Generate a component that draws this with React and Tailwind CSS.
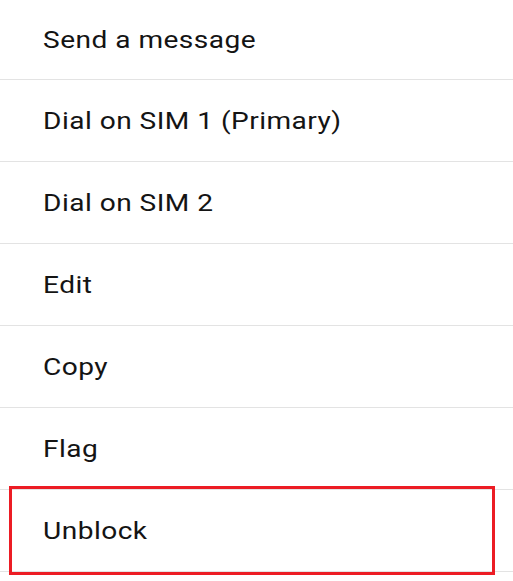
export default function App() {
  const items = [
    "Send a message",
    "Dial on SIM 1 (Primary)",
    "Dial on SIM 2",
    "Edit",
    "Copy",
    "Flag",
    "Unblock",
  ];
  return (
    <div className="relative w-[513px] h-[581px] bg-white overflow-hidden" style={{ fontFamily: "Roboto, 'Noto Sans', sans-serif" }}>
      <div className="flex flex-col">
        {items.map((t, i) => (
          <div
            key={t}
            className={`flex items-center pl-[43px] border-b border-[#e3e3e3] text-[#141414] ${i === 0 ? "h-[80px]" : "h-[82px]"}`}
          >
            <span className="inline-block origin-left scale-x-[1.17] text-[24px] tracking-[0.4px] whitespace-nowrap">{t}</span>
          </div>
        ))}
      </div>
      <div className="absolute left-[9px] top-[486px] w-[486px] h-[89px] border-[3px] border-[#ec1c24]" />
    </div>
  );
}
